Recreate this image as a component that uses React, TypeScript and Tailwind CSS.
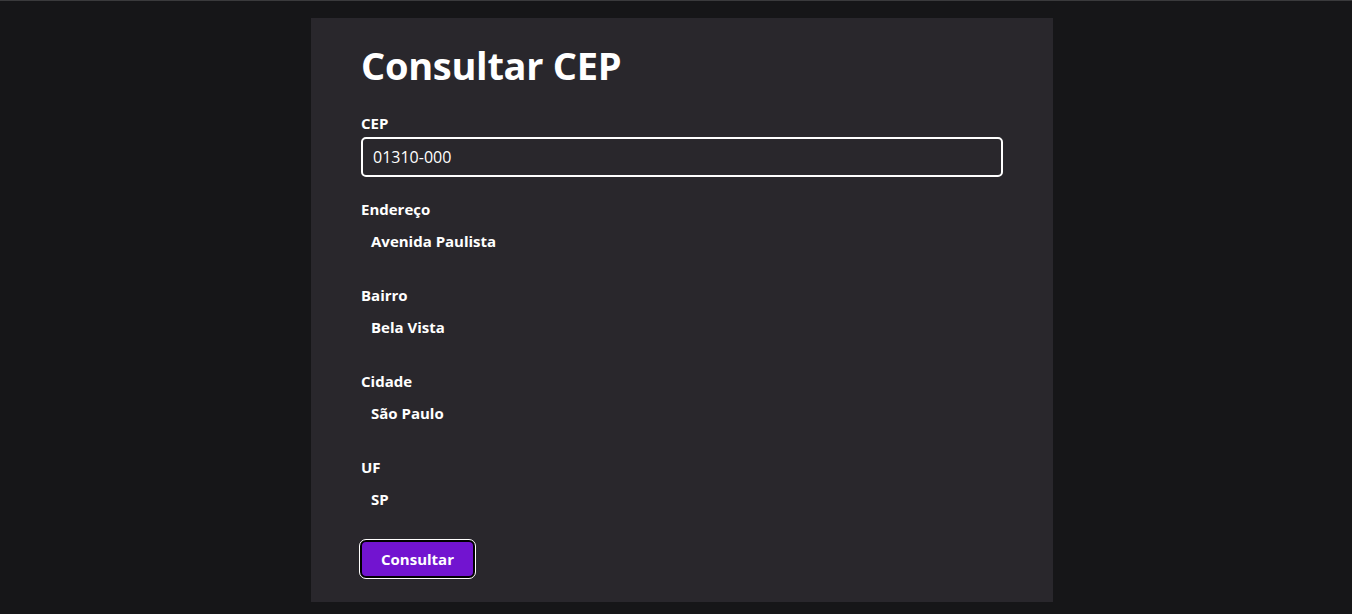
import React from 'react';

const fields = [
  { label: 'Endereço', value: 'Avenida Paulista' },
  { label: 'Bairro', value: 'Bela Vista' },
  { label: 'Cidade', value: 'São Paulo' },
  { label: 'UF', value: 'SP' },
];

const App = () => {
  return (
    <div
      className="min-h-[614px] bg-[#161618] border-t border-[#3a3a3c] pt-[17px] pl-[12px] flex justify-center"
      style={{ fontFamily: '"Open Sans", "Noto Sans", sans-serif' }}
    >
      <div className="w-[742px] h-[584px] bg-[#29272c] px-[50px] pt-[27px] text-white">
        <h1 className="text-[38px] leading-[40px] font-bold tracking-[-0.3px]">Consultar CEP</h1>
        <div className="mt-[28px]">
          <label className="block text-[15px] leading-[20px] font-bold">CEP</label>
          <input
            className="mt-[4px] w-full h-[40px] rounded-[5px] border-2 border-white bg-transparent px-[10px] text-[16px] text-white outline-none"
            defaultValue="01310-000"
          />
        </div>
        <div className="mt-[22px] flex flex-col gap-[34px]">
          {fields.map((f) => (
            <div key={f.label}>
              <div className="text-[15px] leading-[20px] font-bold">{f.label}</div>
              <div className="mt-[12px] pl-[10px] text-[15px] leading-[20px] font-bold">{f.value}</div>
            </div>
          ))}
        </div>
        <button className="mt-[31px] ml-[-1px] h-[38px] px-[19px] rounded-[6px] bg-[#7214d0] border-2 border-black outline outline-1 outline-white text-[15px] font-bold text-white">
          Consultar
        </button>
      </div>
    </div>
  );
};

export default App;
